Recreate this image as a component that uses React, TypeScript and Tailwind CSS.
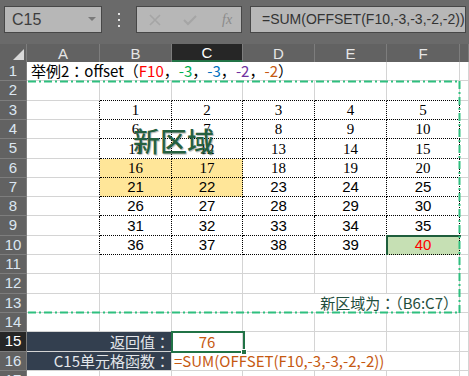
import React from 'react';

const colW = ['w-[73px]', 'w-[72px]', 'w-[71px]', 'w-[72px]', 'w-[72px]', 'w-[73px]', 'w-[9px]'];
const rowH = [
  'h-[19px]', 'h-[20px]', 'h-[19px]', 'h-[19px]', 'h-[20px]', 'h-[19px]', 'h-[19px]', 'h-[19px]',
  'h-[20px]', 'h-[19px]', 'h-[19px]', 'h-[20px]', 'h-[19px]', 'h-[19px]', 'h-[20px]', 'h-[19px]', 'h-[19px]',
];
const letters = ['A', 'B', 'C', 'D', 'E', 'F', ''];

const grid = 'border-r border-b border-[#d4d4d4]';
const dotted = 'border-r border-b border-black border-dotted';

function cellClass(r: number, c: number) {
  // B3:F10 has a dotted black box around every cell
  if (r >= 3 && r <= 10 && c >= 1 && c <= 5) return dotted;
  if (r >= 3 && r <= 10 && c === 0)
    return 'border-r border-b border-b-[#d4d4d4] border-r-black [border-right-style:dotted]';
  if (r === 2 && c >= 1 && c <= 5)
    return 'border-r border-b border-r-[#d4d4d4] border-b-black [border-bottom-style:dotted]';
  return grid;
}

function fillClass(r: number, c: number) {
  if ((r === 6 || r === 7) && (c === 1 || c === 2)) return 'bg-[#ffe699]';
  if (r === 10 && c === 5) return 'bg-[#c6e0b4] text-[#ff0000]';
  return 'bg-white';
}

function NumberRow({ r }: { r: number }) {
  const serif = r <= 6;
  return (
    <>
      {colW.map((w, c) => (
        <div
          key={c}
          className={`${w} ${cellClass(r, c)} ${fillClass(r, c)} flex items-end justify-center text-[15px] leading-[18px] ${
            serif ? "font-['Liberation_Serif',serif]" : "font-['Liberation_Sans',sans-serif]"
          }`}
        >
          {c >= 1 && c <= 5 ? (r - 3) * 5 + c : null}
        </div>
      ))}
    </>
  );
}

function EmptyCells({ r, from = 0 }: { r: number; from?: number }) {
  return (
    <>
      {colW.slice(from).map((w, i) => (
        <div key={i} className={`${w} ${cellClass(r, i + from)} bg-white`} />
      ))}
    </>
  );
}

const cjk = "font-['Noto_Sans_CJK_JP','Noto_Sans_CJK_SC',sans-serif]";

function RowBody({ r }: { r: number }) {
  if (r === 1) {
    return (
      <>
        <div className={`w-[360px] border-b border-r border-[#d4d4d4] bg-white flex items-end pl-[4px] text-[15px] leading-[18px] whitespace-nowrap ${cjk} text-black`}>
          <span>举例2：offset（</span>
          <span className="text-[#ff0000]">F10</span>
          <span>，</span>
          <span className="text-[#00b050]">-3</span>
          <span>，</span>
          <span className="text-[#0070c0]">-3</span>
          <span>，</span>
          <span className="text-[#7030a0]">-2</span>
          <span>，</span>
          <span className="text-[#c65911]">-2</span>
          <span>）</span>
        </div>
        <EmptyCells r={r} from={5} />
      </>
    );
  }
  if (r >= 3 && r <= 10) return <NumberRow r={r} />;
  if (r === 15 || r === 16) {
    return (
      <>
        <div className={`w-[145px] border-r border-b border-[#d4d4d4] bg-[#333f4f] flex items-end justify-end pr-[1px] text-[15px] leading-[18px] text-[#e3e6ea] whitespace-nowrap ${cjk}`}>
          {r === 15 ? '返回值：' : 'C15单元格函数：'}
        </div>
        {r === 15 ? (
          <>
            <div className={`${colW[2]} ${grid} bg-white flex items-end justify-center text-[15px] leading-[18px] text-[#c65911] font-['Noto_Sans_CJK_SC',sans-serif]`}>
              76
            </div>
            <EmptyCells r={r} from={3} />
          </>
        ) : (
          <>
            <div className="w-[288px] border-r border-b border-[#d4d4d4] bg-white flex items-end pl-[2px] text-[15px] leading-[18px] text-[#c65911] whitespace-nowrap font-['Noto_Sans_CJK_SC',sans-serif]">
              =SUM(OFFSET(F10,-3,-3,-2,-2))
            </div>
            <EmptyCells r={r} from={6} />
          </>
        )}
      </>
    );
  }
  return <EmptyCells r={r} />;
}

function Toolbar() {
  return (
    <div className="h-[44px] bg-[#6a6a6a] flex items-start pt-[6px] pl-[4px]">
      <div className="w-[98px] h-[27px] bg-[#b7b7b7] border border-[#474747] flex items-center justify-between pl-[7px] pr-[5px] text-[16px] text-[#3d3d3d] font-['Liberation_Sans',sans-serif]">
        <span>C15</span>
        <svg width="8" height="5" viewBox="0 0 8 5">
          <path d="M0 0 L8 0 L4 4 Z" fill="#7a7a7a" />
        </svg>
      </div>
      <div className="w-[34px] h-[27px] flex flex-col items-center justify-center gap-[4px]">
        <span className="w-[2px] h-[2px] bg-[#e4e4e4]" />
        <span className="w-[2px] h-[2px] bg-[#e4e4e4]" />
        <span className="w-[2px] h-[2px] bg-[#e4e4e4]" />
      </div>
      <div className="w-[106px] h-[27px] bg-[#b7b7b7] border border-[#474747] flex items-center pl-[12px] gap-[22px]">
        <svg width="12" height="12" viewBox="0 0 12 12">
          <path d="M1 1 L11 11 M11 1 L1 11" stroke="#a5a5a5" strokeWidth="1.6" />
        </svg>
        <svg width="14" height="12" viewBox="0 0 14 12">
          <path d="M1 6 L5 10 L13 2" stroke="#a5a5a5" strokeWidth="2" fill="none" />
        </svg>
        <span className="text-[14px] italic text-[#8a8a8a] font-['Liberation_Serif',serif] ml-[3px]">
          fx
        </span>
      </div>
      <div className="ml-[8px] w-[216px] h-[27px] bg-[#b7b7b7] border border-[#474747] flex items-center pl-[11px] text-[14px] text-[#333333] whitespace-nowrap overflow-hidden font-['Liberation_Sans',sans-serif]">
        =SUM(OFFSET(F10,-3,-3,-2,-2))
      </div>
    </div>
  );
}

export default function App() {
  const rows = Array.from({ length: 17 }, (_, i) => i + 1);
  return (
    <div className="relative w-[469px] h-[376px] overflow-hidden bg-white select-none">
      <Toolbar />
      {/* column header */}
      <div className="flex h-[18px] bg-[#626262] font-['Liberation_Sans',sans-serif] text-[15px]">
        <div className="w-[27px] border-r border-[#7d7d7d] relative">
          <svg className="absolute right-[2px] bottom-[2px]" width="11" height="11" viewBox="0 0 11 11">
            <path d="M11 0 L11 11 L0 11 Z" fill="#d9d9d9" />
          </svg>
        </div>
        {colW.map((w, c) => (
          <div
            key={c}
            className={`${w} border-r border-[#7d7d7d] flex items-center justify-center leading-none ${
              c === 2 ? 'bg-[#262626] text-white border-b-2 border-b-[#217346]' : 'text-[#e6e6e6]'
            }`}
          >
            {letters[c]}
          </div>
        ))}
      </div>
      {rows.map((r) => (
        <div key={r} className={`flex ${rowH[r - 1]}`}>
          <div
            className={`w-[27px] shrink-0 border-r border-b border-[#7d7d7d] flex items-center justify-center text-[15px] font-['Liberation_Sans',sans-serif] ${
              r === 15 ? 'bg-[#262626] text-white' : 'bg-[#626262] text-[#dbe6f1]'
            }`}
          >
            {r}
          </div>
          <RowBody r={r} />
        </div>
      ))}

      {/* row 13 note, overflows left from F13 */}
      <div className={`absolute left-[300px] top-[294px] w-[158px] h-[18px] bg-white flex items-end justify-end text-[15px] leading-[18px] text-[#1f4e3d] whitespace-nowrap ${cjk}`}>
        新区域为：（B6:C7）
      </div>

      {/* F10 thick border */}
      <div className="absolute left-[386px] top-[235px] w-[75px] h-[20px] border-t-2 border-l-2 border-[#1f5e3c]" />

      {/* C15 selection */}
      <div className="absolute left-[171px] top-[331px] w-[74px] h-[22px] border-2 border-[#217346]" />
      <div className="absolute left-[241px] top-[349px] w-[6px] h-[6px] bg-[#217346] border border-white" />

      {/* marching ants of the copied range */}
      <svg className="absolute left-0 top-0 pointer-events-none" width="469" height="376">
        <g stroke="#2fbf7f" strokeWidth="2" strokeDasharray="8 3 2 3" fill="none">
          <line x1="28" y1="81.5" x2="460" y2="81.5" />
          <line x1="459.5" y1="81" x2="459.5" y2="313" />
          <line x1="28" y1="312.5" x2="460" y2="312.5" />
        </g>
      </svg>

      {/* floating text box */}
      <div className="absolute left-[133px] top-[126px] text-[27px] leading-[30px] font-medium text-[#25603f] font-['Noto_Sans_CJK_SC',sans-serif] [text-shadow:1px_1px_1px_rgba(0,0,0,0.3)]">
        新区域
      </div>
    </div>
  );
}
